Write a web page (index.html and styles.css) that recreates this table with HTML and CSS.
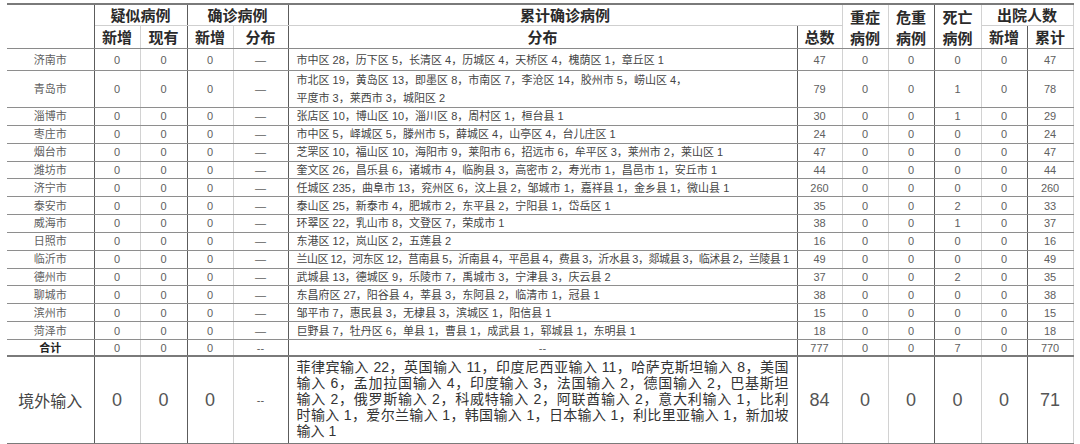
FILE: index.html
```html
<!DOCTYPE html>
<html lang="zh-CN">
<head>
<meta charset="utf-8">
<title>山东省疫情统计</title>
<link rel="stylesheet" href="styles.css">
</head>
<body>
<div class="wrap">
<table class="t">
<colgroup>
<col class="w-city"><col class="w-n"><col class="w-n2"><col class="w-n"><col class="w-dist">
<col class="w-big"><col class="w-tot"><col class="w-n"><col class="w-n"><col class="w-n2"><col class="w-n"><col class="w-n">
</colgroup>
<thead>
<tr class="h1">
<th rowspan="2" class="dk"></th>
<th colspan="2" class="dk hb">疑似病例</th>
<th colspan="2" class="dk hb">确诊病例</th>
<th colspan="2" class="lt hb">累计确诊病例</th>
<th rowspan="2" class="lt two">重症<br>病例</th>
<th rowspan="2" class="dk two">危重<br>病例</th>
<th rowspan="2" class="lt two">死亡<br>病例</th>
<th colspan="2" class="hb lt">出院人数</th>
</tr>
<tr class="h2">
<th class="lt">新增</th>
<th class="dk">现有</th>
<th class="lt">新增</th>
<th class="dk">分布</th>
<th class="dk">分布</th>
<th class="lt">总数</th>
<th class="dk">新增</th>
<th class="lt">累计</th>
</tr>
</thead>
<tbody>
<tr class="r-jn"><td>济南市</td><td>0</td><td>0</td><td>0</td><td>—</td><td class="d">市中区 28，历下区 5，长清区 4，历城区 4，天桥区 4，槐荫区 1，章丘区 1</td><td>47</td><td>0</td><td>0</td><td>0</td><td>0</td><td>47</td></tr>
<tr class="r-qd"><td>青岛市</td><td>0</td><td>0</td><td>0</td><td>—</td><td class="d">市北区 19，黄岛区 13，即墨区 8，市南区 7，李沧区 14，胶州市 5，崂山区 4，<br>平度市 3，莱西市 3，城阳区 2</td><td>79</td><td>0</td><td>0</td><td>1</td><td>0</td><td>78</td></tr>
<tr class="r"><td>淄博市</td><td>0</td><td>0</td><td>0</td><td>—</td><td class="d">张店区 10，博山区 10，淄川区 8，周村区 1，桓台县 1</td><td>30</td><td>0</td><td>0</td><td>1</td><td>0</td><td>29</td></tr>
<tr class="r"><td>枣庄市</td><td>0</td><td>0</td><td>0</td><td>—</td><td class="d">市中区 5，峄城区 5，滕州市 5，薛城区 4，山亭区 4，台儿庄区 1</td><td>24</td><td>0</td><td>0</td><td>0</td><td>0</td><td>24</td></tr>
<tr class="r"><td>烟台市</td><td>0</td><td>0</td><td>0</td><td>—</td><td class="d">芝罘区 10，福山区 10，海阳市 9，莱阳市 6，招远市 6，牟平区 3，莱州市 2，莱山区 1</td><td>47</td><td>0</td><td>0</td><td>0</td><td>0</td><td>47</td></tr>
<tr class="r"><td>潍坊市</td><td>0</td><td>0</td><td>0</td><td>—</td><td class="d">奎文区 26，昌乐县 6，诸城市 4，临朐县 3，高密市 2，寿光市 1，昌邑市 1，安丘市 1</td><td>44</td><td>0</td><td>0</td><td>0</td><td>0</td><td>44</td></tr>
<tr class="r"><td>济宁市</td><td>0</td><td>0</td><td>0</td><td>—</td><td class="d">任城区 235，曲阜市 13，兖州区 6，汶上县 2，邹城市 1，嘉祥县 1，金乡县 1，微山县 1</td><td>260</td><td>0</td><td>0</td><td>0</td><td>0</td><td>260</td></tr>
<tr class="r"><td>泰安市</td><td>0</td><td>0</td><td>0</td><td>—</td><td class="d">泰山区 25，新泰市 4，肥城市 2，东平县 2，宁阳县 1，岱岳区 1</td><td>35</td><td>0</td><td>0</td><td>2</td><td>0</td><td>33</td></tr>
<tr class="r"><td>威海市</td><td>0</td><td>0</td><td>0</td><td>—</td><td class="d">环翠区 22，乳山市 8，文登区 7，荣成市 1</td><td>38</td><td>0</td><td>0</td><td>1</td><td>0</td><td>37</td></tr>
<tr class="r"><td>日照市</td><td>0</td><td>0</td><td>0</td><td>—</td><td class="d">东港区 12，岚山区 2，五莲县 2</td><td>16</td><td>0</td><td>0</td><td>0</td><td>0</td><td>16</td></tr>
<tr class="r"><td>临沂市</td><td>0</td><td>0</td><td>0</td><td>—</td><td class="d tight">兰山区 12，河东区 12，莒南县 5，沂南县 4，平邑县 4，费县 3，沂水县 3，郯城县 3，临沭县 2，兰陵县 1</td><td>49</td><td>0</td><td>0</td><td>0</td><td>0</td><td>49</td></tr>
<tr class="r"><td>德州市</td><td>0</td><td>0</td><td>0</td><td>—</td><td class="d">武城县 13，德城区 9，乐陵市 7，禹城市 3，宁津县 3，庆云县 2</td><td>37</td><td>0</td><td>0</td><td>2</td><td>0</td><td>35</td></tr>
<tr class="r"><td>聊城市</td><td>0</td><td>0</td><td>0</td><td>—</td><td class="d">东昌府区 27，阳谷县 4，莘县 3，东阿县 2，临清市 1，冠县 1</td><td>38</td><td>0</td><td>0</td><td>0</td><td>0</td><td>38</td></tr>
<tr class="r"><td>滨州市</td><td>0</td><td>0</td><td>0</td><td>—</td><td class="d">邹平市 7，惠民县 3，无棣县 3，滨城区 1，阳信县 1</td><td>15</td><td>0</td><td>0</td><td>0</td><td>0</td><td>15</td></tr>
<tr class="r"><td>菏泽市</td><td>0</td><td>0</td><td>0</td><td>—</td><td class="d">巨野县 7，牡丹区 6，单县 1，曹县 1，成武县 1，郓城县 1，东明县 1</td><td>18</td><td>0</td><td>0</td><td>0</td><td>0</td><td>18</td></tr>
<tr class="r-sum"><td class="b">合计</td><td>0</td><td>0</td><td>0</td><td>--</td><td>--</td><td>777</td><td>0</td><td>0</td><td>7</td><td>0</td><td>770</td></tr>
<tr class="r-ext"><td class="ext-name">境外输入</td><td>0</td><td>0</td><td>0</td><td class="dash">--</td><td class="d ext-text"><span class="ln">菲律宾输入 22，英国输入 11，印度尼西亚输入 11，哈萨克斯坦输入 8，美国</span><span class="ln">输入 6，孟加拉国输入 4，印度输入 3，法国输入 2，德国输入 2，巴基斯坦</span><span class="ln">输入 2，俄罗斯输入 2，科威特输入 2，阿联酋输入 2，意大利输入 1，比利</span><span class="ln">时输入 1，爱尔兰输入 1，韩国输入 1，日本输入 1，利比里亚输入 1，新加坡</span><span class="ln last">输入 1</span></td><td>84</td><td>0</td><td>0</td><td>0</td><td>0</td><td>71</td></tr>
</tbody>
</table>
</div>
</body>
</html>
```

FILE: styles.css
```css
html, body {
  margin: 0;
  padding: 0;
  background: #ffffff;
}

.wrap {
  padding: 3px 7px 0 7px;
}

.t {
  width: 1066px;
  border-collapse: collapse;
  table-layout: fixed;
  font-family: "Liberation Sans", "Noto Sans CJK SC", sans-serif;
  color: #606060;
  border-top: 2px solid #7a7a7a;
  border-bottom: 2px solid #7a7a7a;
}

.w-city { width: 87px; }
.w-n { width: 46px; }
.w-n2 { width: 47px; }
.w-dist { width: 55px; }
.w-big { width: 509px; }
.w-tot { width: 45px; }

th {
  font-family: "Noto Sans CJK SC", sans-serif;
  font-weight: 700;
  font-size: 15px;
  color: #2a2a2a;
  padding: 0;
  line-height: 20px;
  text-align: center;
  vertical-align: middle;
  border-bottom: 1px solid #8a8a8a;
}

th.hb {
  border-bottom: 1px solid #cfcfcf;
}

th.two {
  line-height: 21px;
}

.h1 { height: 21px; }
.h2 { height: 23px; }

.dk { border-right: 1px solid #5c5c5c; }
.lt { border-right: 1px solid #d2d2d2; }

td {
  padding: 0;
  font-size: 11px;
  line-height: 14px;
  text-align: center;
  vertical-align: middle;
  border-bottom: 1px solid #8e8e8e;
  white-space: nowrap;
}

td:nth-child(1),
td:nth-child(3),
td:nth-child(5),
td:nth-child(6),
td:nth-child(9),
td:nth-child(11) {
  border-right: 1px solid #5c5c5c;
}

td:nth-child(2),
td:nth-child(4),
td:nth-child(7),
td:nth-child(8),
td:nth-child(10),
td:nth-child(12) {
  border-right: 1px solid #d2d2d2;
}

td.d {
  text-align: left;
  padding-left: 8px;
  color: #444;
  overflow: hidden;
}

td.tight {
  letter-spacing: -0.5px;
}

.r-jn { height: 22px; }
.r-qd { height: 35px; }
.r-qd td.d { line-height: 18px; }
.r { height: 17.85px; }
.r-sum { height: 17px; }
.r-sum td { border-bottom: 2px solid #7a7a7a; }
.r-sum td.b {
  font-weight: 700;
  color: #222;
}

.r-ext { height: 88px; }
.r-ext td {
  font-size: 18px;
  color: #555;
  border-bottom: 0;
}
.r-ext td.ext-name {
  font-family: "Noto Sans CJK SC", sans-serif;
  font-size: 16px;
  color: #444;
}
.r-ext td.dash {
  font-size: 11px;
}
.r-ext td.ext-text {
  font-size: 14px;
  line-height: 15.8px;
  color: #333;
  padding: 3px 8px 2px 8px;
  vertical-align: top;
}

.ln {
  display: block;
  white-space: nowrap;
  text-align: justify;
  text-align-last: justify;
}

.ln.last {
  text-align-last: left;
}
```
